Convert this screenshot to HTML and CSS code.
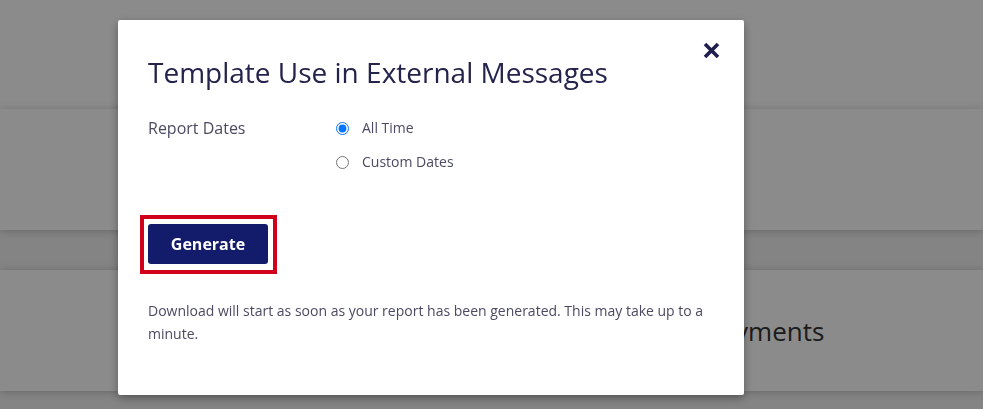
FILE: index.html
```html
<!DOCTYPE html>
<html lang="en">
<head>
<meta charset="utf-8">
<title>Template Use in External Messages</title>
<link rel="stylesheet" href="styles.css">
</head>
<body>
<div class="page">
  <header class="page-header"></header>
  <section class="card"></section>
  <section class="card card-title">
    <h2 class="card-heading">Payments</h2>
  </section>
</div>

<div class="overlay">
  <div class="modal" role="dialog" aria-labelledby="modal-title">
    <button class="close" aria-label="Close">
      <svg width="17" height="17" viewBox="0 0 17 17" aria-hidden="true">
        <path d="M2 2 L15 15 M15 2 L2 15" stroke="#1f1f4d" stroke-width="3.6" stroke-linecap="butt" fill="none"/>
      </svg>
    </button>
    <h1 class="modal-title" id="modal-title">Template Use in External Messages</h1>
    <div class="form-row">
      <div class="form-label">Report Dates</div>
      <div class="options">
        <label class="option"><input type="radio" name="dates" checked><span>All Time</span></label>
        <label class="option"><input type="radio" name="dates"><span>Custom Dates</span></label>
      </div>
    </div>
    <div class="actions">
      <span class="highlight"><button class="btn-primary">Generate</button></span>
    </div>
    <p class="note">Download will start as soon as your report has been generated. This may take up to a minute.</p>
  </div>
</div>
</body>
</html>
```

FILE: styles.css
```css
* { box-sizing: border-box; }

html, body {
  margin: 0;
  height: 100%;
  overflow: hidden;
}

body {
  background: #f2f2f2;
  font-family: "Open Sans", "Liberation Sans", sans-serif;
}

.page {
  display: flex;
  flex-direction: column;
  gap: 40px;
}

.page-header {
  height: 109px;
  background: #ffffff;
  margin-bottom: -40px;
}

.card {
  height: 121px;
  background: #ffffff;
  box-shadow: 0 1px 8px rgba(0, 0, 0, 0.22);
}

.card-title {
  display: flex;
  align-items: center;
  padding-left: 705px;
}

.card-heading {
  margin: 0;
  font-size: 26px;
  font-weight: 400;
  color: #333333;
  line-height: 1.3;
  padding-top: 3px;
}

.overlay {
  position: fixed;
  inset: 0;
  background: rgba(0, 0, 0, 0.455);
  padding: 20px 0 0 118px;
}

.modal {
  position: relative;
  width: 626px;
  height: 375px;
  background: #ffffff;
  border-radius: 2px;
  box-shadow: 0 3px 10px rgba(0, 0, 0, 0.35);
  padding: 33px 30px 0 30px;
}

.close {
  position: absolute;
  top: 22px;
  right: 24px;
  width: 17px;
  height: 17px;
  padding: 0;
  border: 0;
  background: none;
  display: flex;
  cursor: pointer;
}

.modal-title {
  margin: 0;
  font-size: 28px;
  font-weight: 400;
  line-height: 38px;
  color: #23234b;
}

.form-row {
  display: grid;
  grid-template-columns: 188px 1fr;
  margin-top: 25px;
}

.form-label {
  font-size: 16px;
  line-height: 24px;
  color: #4a4a63;
}

.options {
  display: flex;
  flex-direction: column;
  gap: 10px;
}

.option {
  display: flex;
  align-items: center;
  height: 24px;
  font-size: 14px;
  color: #4a4a63;
  gap: 13px;
}

.option input {
  margin: 0;
  width: 13px;
  height: 13px;
}

.option span {
  line-height: 24px;
}

.actions {
  margin-top: 41px;
  display: flex;
  margin-left: -8px;
}

.highlight {
  display: inline-flex;
  border: 4px solid #d0021b;
  padding: 5px 5px 6px 4px;
}

.btn-primary {
  width: 120px;
  height: 40px;
  border: 0;
  border-radius: 3px;
  background: #131b6b;
  color: #ffffff;
  font-family: "Open Sans", "Liberation Sans", sans-serif;
  font-size: 16px;
  font-weight: 700;
  cursor: pointer;
}

.note {
  margin: 25px 0 0 0;
  font-size: 14px;
  line-height: 23px;
  color: #4a4a63;
}
```
